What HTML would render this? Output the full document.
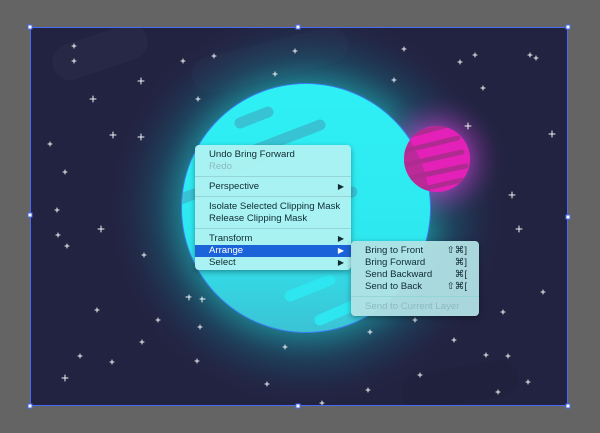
<!DOCTYPE html>
<html><head><meta charset="utf-8"><style>
body{margin:0;width:600px;height:433px;background:#646464;overflow:hidden;position:relative;font-family:"Liberation Sans",sans-serif}
svg{position:absolute;left:0;top:0}
.menu{position:absolute;background:rgba(176,242,242,0.94);border-radius:4px;box-shadow:0 2px 6px rgba(0,0,0,.35);font-size:9.6px;color:#0f2b33;line-height:12px}
.it{position:relative;padding-left:14px;height:12px}
.dis{color:#8bbac0}
.sep{height:1px;background:#94d6d8;margin:3px 0 4px}
.ar{position:absolute;right:7px;top:0;font-size:8px}
.hl{background:#1b63d8;color:#fff}
.sc{position:absolute;right:12px;top:0}
</style></head><body>
<svg width="600" height="433" viewBox="0 0 600 433">
<defs>
<radialGradient id="glow" cx="306" cy="208" r="200" gradientUnits="userSpaceOnUse">
<stop offset="0.55" stop-color="#1ec7c9" stop-opacity="0.75"/>
<stop offset="0.75" stop-color="#1a5f77" stop-opacity="0.5"/>
<stop offset="1" stop-color="#232445" stop-opacity="0"/>
</radialGradient>
<radialGradient id="pglow" cx="437" cy="159" r="70" gradientUnits="userSpaceOnUse">
<stop offset="0.45" stop-color="#b63ac0" stop-opacity="0.6"/>
<stop offset="1" stop-color="#232445" stop-opacity="0"/>
</radialGradient>
<linearGradient id="pl" x1="0" y1="0" x2="0" y2="1">
<stop offset="0" stop-color="#2ef0f4"/><stop offset="0.6" stop-color="#2ee8f0"/><stop offset="1" stop-color="#3bc3d5"/>
</linearGradient>
<clipPath id="pc"><circle cx="437" cy="159" r="33"/></clipPath>
<clipPath id="bc"><circle cx="306" cy="208" r="124"/></clipPath>
<clipPath id="cv"><rect x="30" y="27" width="538" height="379"/></clipPath>
</defs>
<rect x="30" y="27" width="538" height="379" fill="#222341"/>
<g clip-path="url(#cv)">
<g stroke="#262846" stroke-width="36" stroke-linecap="round" fill="none">
<line x1="70" y1="62" x2="130" y2="42"/>
<line x1="210" y1="75" x2="330" y2="45"/>
<line x1="420" y1="392" x2="500" y2="378" stroke="#20213d"/>
</g>
<circle cx="306" cy="208" r="200" fill="url(#glow)"/>
<circle cx="437" cy="159" r="70" fill="url(#pglow)"/>
</g>
<circle cx="306" cy="208" r="125" fill="#3a7cf0"/>
<circle cx="306" cy="208" r="124" fill="url(#pl)"/>
<g clip-path="url(#bc)" stroke-linecap="round" fill="none">
<g stroke="#37c3d4" stroke-width="11">
<line x1="240" y1="123" x2="268" y2="112"/>
<line x1="255" y1="150" x2="320" y2="125"/>
<line x1="225" y1="172" x2="260" y2="158"/>
<line x1="178" y1="200" x2="200" y2="192"/>
<line x1="330" y1="200" x2="352" y2="192"/>
</g>
<g stroke="#2de6ef" stroke-width="11">
<line x1="290" y1="296" x2="330" y2="280"/>
<line x1="320" y1="320" x2="352" y2="306"/>
</g>
</g>
<circle cx="437" cy="159" r="33" fill="#e321b8"/>
<g clip-path="url(#pc)">
<circle cx="306" cy="208" r="124" fill="#a8318c" opacity="0.7"/>
<g stroke="#b02b91" stroke-width="5" stroke-linecap="round">
<line x1="400" y1="138" x2="448" y2="125"/>
<line x1="400" y1="152" x2="458" y2="138"/>
<line x1="400" y1="166" x2="462" y2="152"/>
<line x1="400" y1="180" x2="466" y2="166"/>
<line x1="410" y1="192" x2="462" y2="180"/>
</g>
</g>
<g stroke="#fff" stroke-width="1" stroke-linecap="round" opacity="0.95">
<path d="M74 44v4M72 46h4M74 59v4M72 61h4M141 78v6M138 81h6M93 96v6M90 99h6M183 59v4M181 61h4M214 54v4M212 56h4M198 97v4M196 99h4M113 132v6M110 135h6M141 134v6M138 137h6M50 142v4M48 144h4M295 49v4M293 51h4M275 72v4M273 74h4M101 226v6M98 229h6M67 244v4M65 246h4M144 253v4M142 255h4M97 308v4M95 310h4M158 318v4M156 320h4M142 340v4M140 342h4M189 295v5M186 297h5M202 297v5M200 299h5M200 325v4M198 327h4M80 354v4M78 356h4M65 375v6M62 378h6M197 359v4M195 361h4M285 345v4M283 347h4M267 382v4M265 384h4M468 123v6M465 126h6M552 131v6M549 134h6M512 192v6M509 195h6M519 226v6M516 229h6M543 290v4M541 292h4M503 310v4M501 312h4M415 318v4M413 320h4M370 330v4M368 332h4M454 338v4M452 340h4M486 353v4M484 355h4M508 354v4M506 356h4M420 373v4M418 375h4M528 380v4M526 382h4M368 388v4M366 390h4M498 390v4M496 392h4M322 401v4M320 403h4M112 360v4M110 362h4M460 60v4M458 62h4M394 78v4M392 80h4M475 53v4M473 55h4M404 47v4M402 49h4M536 56v4M534 58h4M483 86v4M481 88h4M530 53v4M528 55h4M58 233v4M56 235h4M57 208v4M55 210h4M65 170v4M63 172h4"/>
</g>
<rect x="30.5" y="27.5" width="537" height="378" fill="none" stroke="#4a6bf0" stroke-width="1"/>
<g fill="#fff" stroke="#4a6bf0" stroke-width="1">
<rect x="28" y="25" width="4" height="4"/><rect x="296" y="25" width="4" height="4"/><rect x="566" y="25" width="4" height="4"/>
<rect x="28" y="213" width="4" height="4"/><rect x="566" y="215" width="4" height="4"/>
<rect x="28" y="404" width="4" height="4"/><rect x="296" y="404" width="4" height="4"/><rect x="566" y="404" width="4" height="4"/>
</g>
</svg>
<div class="menu" style="left:195px;top:145px;width:156px;height:125px;padding-top:4px;box-sizing:border-box">
<div class="it">Undo Bring Forward</div>
<div class="it dis">Redo</div>
<div class="sep"></div>
<div class="it">Perspective<span class="ar">▶</span></div>
<div class="sep"></div>
<div class="it">Isolate Selected Clipping Mask</div>
<div class="it">Release Clipping Mask</div>
<div class="sep"></div>
<div class="it">Transform<span class="ar">▶</span></div>
<div class="it hl">Arrange<span class="ar">▶</span></div>
<div class="it">Select<span class="ar">▶</span></div>
</div>
<div class="menu" style="left:351px;top:241px;width:128px;height:75px;padding-top:4px;box-sizing:border-box;background:rgba(178,226,230,0.94)">
<div class="it">Bring to Front<span class="sc">⇧⌘]</span></div>
<div class="it">Bring Forward<span class="sc">⌘]</span></div>
<div class="it">Send Backward<span class="sc">⌘[</span></div>
<div class="it">Send to Back<span class="sc">⇧⌘[</span></div>
<div class="sep"></div>
<div class="it dis">Send to Current Layer</div>
</div>
</body></html>
